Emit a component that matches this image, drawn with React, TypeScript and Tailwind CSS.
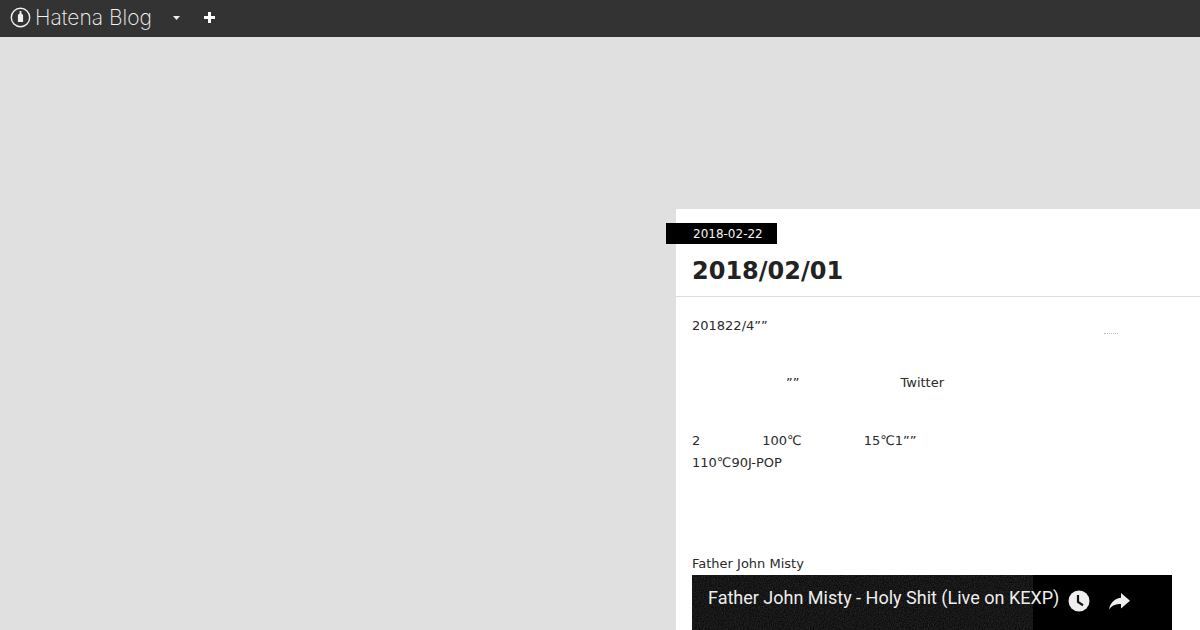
export default function App() {
  const dv = { fontFamily: '"DejaVu Sans", sans-serif' };
  return (
    <div className="h-[630px] w-[1200px] overflow-hidden bg-[#e0e0e0]" style={dv}>
      <header className="flex h-[37px] items-center bg-[#333333] pb-[2px] pl-[10px] text-white">
        <svg width="21" height="21" viewBox="0 0 21 21" fill="none">
          <circle cx="10.5" cy="10.5" r="9.2" stroke="#f0f0f0" strokeWidth="1.4" />
          <path d="M9.6 4h1.8v2.4c1.2.6 1.7 1.4 1.7 2.6v6H7.9V9c0-1.2.5-2 1.7-2.6z" fill="#f0f0f0" />
        </svg>
        <span className="ml-[4px] w-[118px] whitespace-nowrap text-[21px] font-extralight leading-none text-[#f4f4f4]" style={{ fontFamily: 'Inter, sans-serif' }}>
          Hatena Blog
        </span>
        <svg className="ml-[20px]" width="7" height="4" viewBox="0 0 7 4"><path d="M0 0h7L3.5 4z" fill="#eee" /></svg>
        <svg className="ml-[24px]" width="11" height="11" viewBox="0 0 11 11"><path d="M4 0h3v4h4v3H7v4H4V7H0V4h4z" fill="#fff" /></svg>
      </header>
      <main className="pl-[676px] pt-[172px]">
        <article className="h-[421px] bg-white text-[13px] text-[#2a2a2a]">
          <div className="pt-[14px]">
            <div className="relative -ml-[10px] flex h-[21px] w-[111px] items-center bg-black pl-[27px] text-[12px] text-[#f4f4f4]">2018-02-22</div>
          </div>
          <h1 className="h-[53px] border-b border-[#dddddd] pl-[16px] pt-[11px] text-[24px] font-bold leading-[32px] text-[#222222]">2018/02/01</h1>
          <div className="relative px-[16px] pt-[18px] leading-[22px]">
            <div className="h-[22px]">201822/4””</div>
            <span className="absolute left-[428px] top-[36px] h-px w-[14px] border-b border-dotted border-[#bbbbbb]" />
            <div className="mt-[35px] flex h-[22px]"><span className="ml-[94px]">””</span><span className="ml-[101px]">Twitter</span></div>
            <div className="mt-[36px] flex h-[22px]"><span>2</span><span className="ml-[62px]">100℃</span><span className="ml-[62px]">15℃1””</span></div>
            <div className="h-[22px]">110℃90J-POP</div>
            <div className="mt-[79px] h-[22px]">Father John Misty</div>
            <div className="relative flex h-[55px] w-[480px] bg-black">
              <svg className="absolute left-0 top-0" width="341" height="55">
                <filter id="noise"><feTurbulence type="fractalNoise" baseFrequency="0.8" numOctaves="2" /><feColorMatrix values="0 0 0 0 1 0 0 0 0 1 0 0 0 0 1 0 0 0 0.2 -0.04" /></filter>
                <rect width="341" height="55" fill="#080808" />
                <rect width="341" height="55" filter="url(#noise)" />
              </svg>
              <span className="relative ml-[16px] mt-[10px] whitespace-nowrap text-[18px] leading-[26px] text-[#eeeeee]" style={{ fontFamily: 'Roboto, sans-serif' }}>
                Father John Misty - Holy Shit (Live on KEXP)
              </span>
              <svg className="relative ml-[9px] mt-[15px]" width="22" height="22" viewBox="0 0 22 22">
                <circle cx="11" cy="11" r="10.5" fill="#eeeeee" />
                <path d="M10 5v7l5 3.2" fill="none" stroke="#111" strokeWidth="2.2" />
              </svg>
              <svg className="relative ml-[18px] mt-[15px]" width="22" height="22" viewBox="0 0 22 22">
                <path d="M13 3l9 7.8-9 7.8v-4.6c-5.5 0-9.3 1.7-12 5.5 1-5.5 4.2-10.8 12-11.8z" fill="#eeeeee" />
              </svg>
            </div>
          </div>
        </article>
      </main>
    </div>
  );
}
